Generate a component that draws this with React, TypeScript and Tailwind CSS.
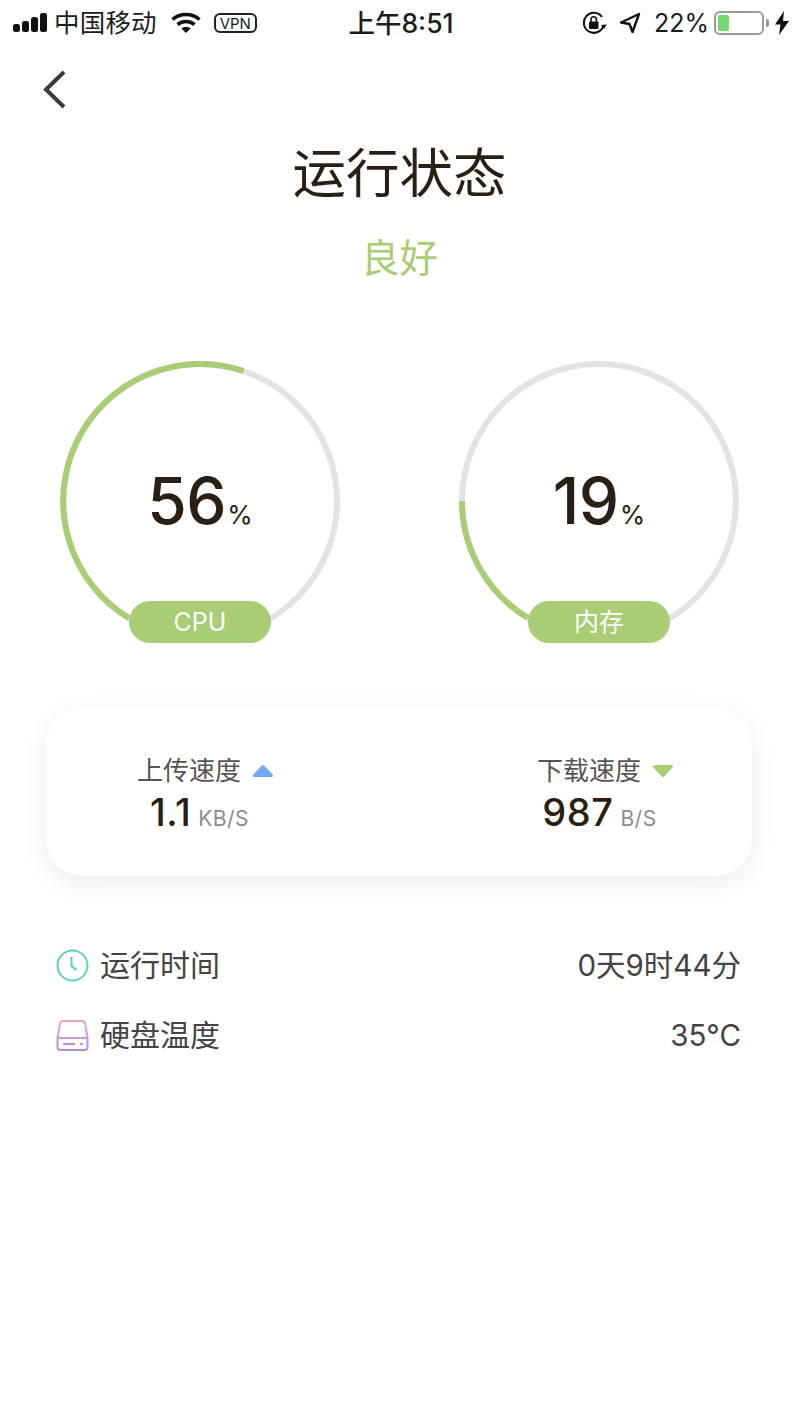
const sans = "font-['Inter','Noto_Sans_CJK_SC',sans-serif]"

function StatusBar() {
	return (
		<div className="flex items-center justify-between h-[46px] pl-[13px] pr-[10px] text-[#1c1c1c]">
			<div className="flex items-center flex-1">
				{/* SIGNAL */}
				<svg width="34" height="20" viewBox="0 0 34 20" fill="#111">
					<rect x="0" y="11" width="7" height="8" rx="2.5" />
					<rect x="9" y="8" width="7" height="11" rx="2.5" />
					<rect x="18" y="4" width="7" height="15" rx="2.5" />
					<rect x="27" y="0" width="7" height="19" rx="2.5" />
				</svg>
				<span className="ml-[7px] text-[25.5px] leading-none tracking-[0.2px]">中国移动</span>
				{/* WIFI */}
				<svg className="ml-[14px]" width="30" height="22" viewBox="0 0 30 22" fill="none" stroke="#111" strokeWidth="3.6">
					<path d="M1.5 7.5C9 .8 21 .8 28.5 7.5" />
					<path d="M6.5 12.5c4.8-4 12.2-4 17 0" />
					<path d="M15 21l-4.6-4.6c2.6-1.9 6.6-1.9 9.2 0z" fill="#111" stroke="none" />
				</svg>
				<span className="ml-[13px] flex items-center justify-center w-[43px] h-[20px] rounded-[6px] border-2 border-[#222] text-[15px] leading-none">VPN</span>
			</div>
			<div className="text-[26.5px] leading-none font-medium text-center w-[110px] shrink-0">上午8:51</div>
			<div className="flex items-center justify-end flex-1">
				{/* ROTATION LOCK */}
				<svg width="25" height="24" viewBox="0 0 25 24" fill="none">
					<path d="M21.5 14.5A10 10 0 1 1 20 6" stroke="#111" strokeWidth="2" />
					<path d="M19 14l5.800-.5-2.800 4.500z" fill="#111" />
					<rect x="7" y="10.500" width="9.500" height="7.500" rx="1" fill="#111" />
					<path d="M9 11V8.500a2.700 2.700 0 0 1 5.400 0V11" stroke="#111" strokeWidth="1.600" />
				</svg>
				{/* LOCATION */}
				<svg className="ml-[12px]" width="22" height="22" viewBox="0 0 22 22" fill="none">
					<path d="M20 2 2 10.500l8.500 1.500L13.500 20z" stroke="#111" strokeWidth="2.400" strokeLinejoin="round" />
				</svg>
				<span className="ml-[13px] text-[25px] leading-none">22%</span>
				{/* BATTERY */}
				<div className="ml-[5px] w-[50px] h-[24px] rounded-[6px] border-2 border-[#999] p-[2px]">
					<div className="w-[11px] h-full bg-[#74d874] rounded-[2px]" />
				</div>
				<div className="ml-[2px] w-[3px] h-[8px] rounded-r-[2px] bg-[#999]" />
				<svg className="ml-[6px]" width="14" height="24" viewBox="0 0 14 24" fill="#111">
					<path d="M9 0 0 13.500h5.500L4 24l10-14H8z" />
				</svg>
			</div>
		</div>
	)
}

function Ring({ arc, label, value }: { arc: string; label: string; value: string }) {
	return (
		<div className="relative flex items-center justify-center w-[280px] h-[280px]">
			<svg className="absolute inset-0" width="280" height="280" viewBox="0 0 280 280" fill="none">
				<circle cx="140" cy="140" r="137" stroke="#e3e3e3" strokeWidth="6" />
				<path d={arc} stroke="#a8cd75" strokeWidth="6" />
			</svg>
			<div className="flex items-baseline text-[#2a1f14]">
				<span className="text-[64px] leading-none font-medium tracking-[-0.5px]">{value}</span>
				<span className="text-[26px] leading-none ml-[1px]">%</span>
			</div>
			<div className="absolute left-[69px] bottom-[-2px] flex items-center justify-center w-[142px] h-[42px] rounded-[21px] bg-[#a8cd75] text-white text-[25px] leading-none">
				{label}
			</div>
		</div>
	)
}

function Speed({ label, value, unit, arrow }: { label: string; value: string; unit: string; arrow: React.ReactNode }) {
	return (
		<div className="flex flex-col items-center">
			<div className="flex items-center text-[26px] leading-[30px] text-[#555]">
				{label}
				<span className="ml-[11px]">{arrow}</span>
			</div>
			<div className="flex items-baseline mt-[4px] pr-[12px]">
				<span className="text-[38px] leading-[44px] font-medium tracking-[0.5px] text-[#2a1f14]">{value}</span>
				<span className="ml-[7px] text-[21px] leading-none tracking-[0.5px] text-[#8c8c8c]">{unit}</span>
			</div>
		</div>
	)
}

export default function App() {
	return (
		<div className={`w-[799px] h-[1421px] bg-white overflow-hidden ${sans}`}>
			<StatusBar />
			{/* BACK */}
			<div className="h-[72px] pl-[42px] pt-[23px]">
				<svg width="26" height="40" viewBox="0 0 26 40" fill="none">
					<path d="M22 3 4 20.500 22 38" stroke="#3a3a3a" strokeWidth="4" />
				</svg>
			</div>
			{/* HEADER */}
			<div className="flex flex-col items-center">
				<h1 className="text-[53.5px] leading-[60px] mt-[26px] text-[#2a1f14]">运行状态</h1>
				<div className="text-[38.5px] leading-[46px] mt-[31px] text-[#a8cd75]">良好</div>
			</div>
			{/* RINGS */}
			<div className="flex justify-between px-[60px] mt-[80px]">
				<Ring value="56" label="CPU" arc="M183.500 10A137 137 0 0 0 69 257" />
				<Ring value="19" label="内存" arc="M3 140A137 137 0 0 0 69 257" />
			</div>
			{/* SPEEDS */}
			<div className="flex justify-between items-center ml-[46px] w-[706px] h-[168px] mt-[67px] pl-[91px] pr-[78px] pt-[6px] rounded-[36px] bg-white shadow-[0_6px_24px_rgba(0,0,0,0.08)]">
				<Speed
					label="上传速度"
					value="1.1"
					unit="KB/S"
					arrow={
						<svg className="block" width="22" height="16" viewBox="0 0 22 16">
							<path d="M11 3.500 19.500 12.500H2.500z" fill="#74a8f3" stroke="#74a8f3" strokeWidth="3" strokeLinejoin="round" />
						</svg>
					}
				/>
				<Speed
					label="下载速度"
					value="987"
					unit="B/S"
					arrow={
						<svg className="block" width="22" height="16" viewBox="0 0 22 16">
							<path d="M11 12.500 19.500 3.500H2.500z" fill="#a8cd75" stroke="#a8cd75" strokeWidth="3" strokeLinejoin="round" />
						</svg>
					}
				/>
			</div>
			{/* INFO ROWS */}
			<div className="flex flex-col gap-[34px] mt-[71px] pl-[56px] pr-[58px] text-[30px] leading-[36px] text-[#444]">
				<div className="flex items-center justify-between">
					<div className="flex items-center gap-[11px]">
						<svg width="33" height="33" viewBox="0 0 33 33" fill="none">
							<defs>
								<linearGradient id="clock" x1="0" y1="0" x2="1" y2="1">
									<stop offset="0" stopColor="#5ac8c8" />
									<stop offset="1" stopColor="#66dba0" />
								</linearGradient>
							</defs>
							<circle cx="16.500" cy="16.500" r="15" stroke="url(#clock)" strokeWidth="2" />
							<path d="M15.500 8v9l5 4" stroke="#5ccbb4" strokeWidth="2" />
						</svg>
						<span>运行时间</span>
					</div>
					<span className="text-[29.5px]">0天9时44分</span>
				</div>
				<div className="flex items-center justify-between">
					<div className="flex items-center gap-[11px]">
						<svg width="33" height="33" viewBox="0 0 33 33" fill="none">
							<defs>
								<linearGradient id="disk" x1="0" y1="0" x2="0" y2="1">
									<stop offset="0" stopColor="#e8a8c8" />
									<stop offset="1" stopColor="#b88ae0" />
								</linearGradient>
							</defs>
							<path d="M7 2h19q2.500 0 3 2.500l2.500 14V28q0 3-3 3H4.500q-3 0-3-3v-9.500L4 4.500Q4.500 2 7 2z" stroke="url(#disk)" strokeWidth="2" />
							<path d="M1.500 19h30" stroke="#c79adb" strokeWidth="2" />
							<path d="M7 25h12M24 25h3" stroke="#b88ae0" strokeWidth="2" />
						</svg>
						<span>硬盘温度</span>
					</div>
					<span className="text-[29.5px]">35°C</span>
				</div>
			</div>
		</div>
	)
}
